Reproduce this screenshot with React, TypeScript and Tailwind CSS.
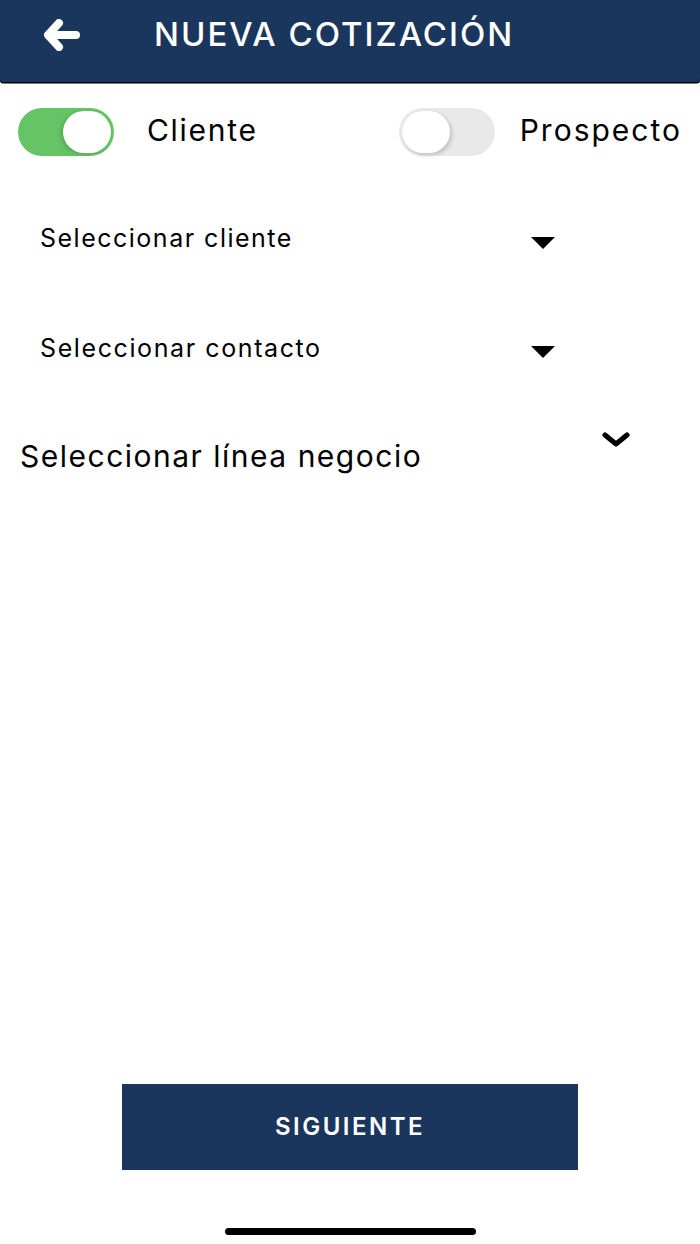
import React, { useState } from "react";

function Toggle({ on, onClick }: { on: boolean; onClick: () => void }) {
  return (
    <button
      onClick={onClick}
      className={
        on
          ? "relative h-[48px] w-[96px] shrink-0 rounded-full bg-[#65c466]"
          : "relative h-[48px] w-[96px] shrink-0 rounded-full bg-[#e9e9ea]"
      }
    >
      <span
        className={
          on
            ? "absolute right-[3px] top-[3px] h-[42px] w-[48px] rounded-full bg-white shadow-[-2px_1px_4px_rgba(0,0,0,0.15)]"
            : "absolute left-[3px] top-[3px] h-[42px] w-[48px] rounded-full bg-white shadow-[2px_2px_4px_rgba(0,0,0,0.18)]"
        }
      />
    </button>
  );
}

function Caret() {
  return (
    <svg width="24" height="12" viewBox="0 0 24 12">
      <path d="M0 0 H24 L12 12 Z" fill="#000" />
    </svg>
  );
}

export default function App() {
  const [isCliente, setIsCliente] = useState(true);

  return (
    <div
      className="relative flex h-[1244px] w-[700px] flex-col bg-white text-black"
      style={{ fontFamily: "Inter, 'Liberation Sans', Arial, sans-serif" }}
    >
      {/* Header */}
      <div className="flex h-[82px] items-center rounded-b-[3px] bg-[#1b365d] pb-[12px] shadow-[0_1.5px_0_#000]">
        <button className="ml-[43px] flex h-[34px] w-[38px] items-center">
          <svg width="37" height="32" viewBox="0 0 37 32">
            <path
              d="M16 4 L5 16 L16 28 M6 16 H33"
              fill="none"
              stroke="#fff"
              strokeWidth="8"
              strokeLinecap="round"
              strokeLinejoin="round"
            />
          </svg>
        </button>
        <h1 className="ml-[73px] text-[33px] font-medium tracking-[2px] text-white">
          NUEVA COTIZACIÓN
        </h1>
      </div>

      {/* Tipo toggles */}
      <div className="mt-[26px] flex items-center px-[18px]">
        <Toggle on={isCliente} onClick={() => setIsCliente(true)} />
        <span className="ml-[33px] mt-[-4px] text-[30px] tracking-[1.7px]">Cliente</span>
        <div className="ml-auto flex items-center">
          <Toggle on={!isCliente} onClick={() => setIsCliente(false)} />
          <span className="ml-[25px] mt-[-4px] text-[30px] tracking-[2px]">Prospecto</span>
        </div>
      </div>

      {/* Selects */}
      <div className="mt-[64px] flex items-center pl-[40px] pr-[145px]">
        <span className="text-[25px] tracking-[1.5px]">Seleccionar cliente</span>
        <span className="ml-auto mt-[8px]">
          <Caret />
        </span>
      </div>
      <div className="mt-[72px] flex items-center pl-[40px] pr-[145px]">
        <span className="text-[25px] tracking-[1.6px]">Seleccionar contacto</span>
        <span className="ml-auto mt-[8px]">
          <Caret />
        </span>
      </div>
      <div className="mt-[65px] flex items-start pl-[20px] pr-[70px]">
        <span className="mt-[2px] text-[30px] tracking-[1.5px]">Seleccionar línea negocio</span>
        <svg className="ml-auto" width="28" height="16" viewBox="0 0 28 16">
          <path
            d="M3 3 L14 12 L25 3"
            fill="none"
            stroke="#000"
            strokeWidth="5"
            strokeLinecap="round"
            strokeLinejoin="round"
          />
        </svg>
      </div>

      {/* Footer */}
      <div className="mt-auto flex flex-col items-center">
        <button className="flex h-[86px] w-[456px] items-center justify-center bg-[#1b365d] text-[24px] font-semibold tracking-[2.5px] text-white">
          SIGUIENTE
        </button>
        <div className="mb-[9px] mt-[58px] h-[7px] w-[251px] rounded-full bg-black" />
      </div>
    </div>
  );
}
